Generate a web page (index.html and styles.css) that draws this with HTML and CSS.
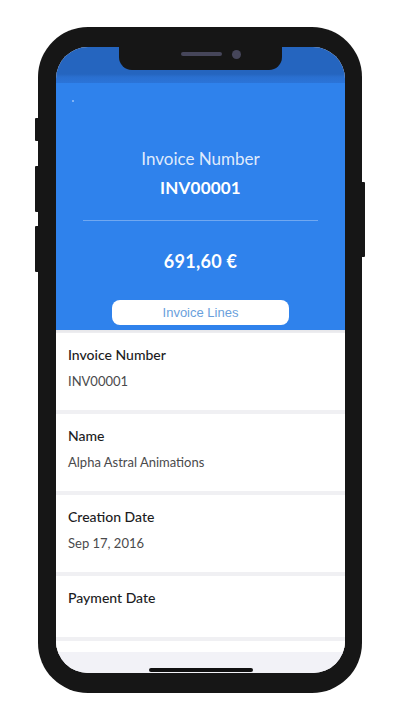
FILE: index.html
```html
<!DOCTYPE html>
<html lang="en">
<head>
<meta charset="utf-8">
<title>Invoice</title>
<link rel="stylesheet" href="styles.css">
</head>
<body>
<div class="stage">
  <div class="phone">
    <span class="side-btn side-btn--l1"></span>
    <span class="side-btn side-btn--l2"></span>
    <span class="side-btn side-btn--l3"></span>
    <span class="side-btn side-btn--r"></span>
    <div class="screen">
      <div class="notch"><span class="speaker"></span><span class="camera"></span></div>
      <div class="statusbar"></div>
      <header class="hero">
        <span class="back-dot"></span>
        <div class="hero-label">Invoice Number</div>
        <div class="hero-number">INV00001</div>
        <div class="hero-divider"></div>
        <div class="hero-amount">691,60 €</div>
        <button class="lines-btn" type="button">Invoice Lines</button>
      </header>
      <ul class="fields">
        <li class="field">
          <div class="field-label">Invoice Number</div>
          <div class="field-value">INV00001</div>
        </li>
        <li class="field">
          <div class="field-label">Name</div>
          <div class="field-value">Alpha Astral Animations</div>
        </li>
        <li class="field">
          <div class="field-label">Creation Date</div>
          <div class="field-value">Sep 17, 2016</div>
        </li>
        <li class="field">
          <div class="field-label">Payment Date</div>
          <div class="field-value field-value--empty"></div>
        </li>
        <li class="field field--blank"></li>
      </ul>
      <div class="bottom-bar"><span class="home-indicator"></span></div>
    </div>
  </div>
</div>
</body>
</html>
```

FILE: styles.css
```css
* { box-sizing: border-box; }

html, body {
  margin: 0;
  padding: 0;
  background: #ffffff;
}

body {
  font-family: Lato, "Noto Sans", sans-serif;
  width: 400px;
  height: 720px;
  overflow: hidden;
}

.stage {
  width: 400px;
  height: 720px;
  display: flex;
  align-items: center;
  justify-content: center;
}

.phone {
  position: relative;
  width: 324px;
  height: 666px;
  background: #161616;
  border-radius: 50px;
  padding: 20px 17px 20px 18px;
  display: flex;
}

.side-btn {
  position: absolute;
  width: 4px;
  background: #161616;
  border-radius: 1px;
}
.side-btn--l1 { left: -3px; top: 91px; height: 23px; }
.side-btn--l2 { left: -3px; top: 139px; height: 46px; }
.side-btn--l3 { left: -3px; top: 199px; height: 46px; }
.side-btn--r  { right: -3px; top: 155px; height: 75px; }

.screen {
  position: relative;
  flex: 1;
  border-radius: 32px;
  overflow: hidden;
  background: #f2f2f6;
  display: flex;
  flex-direction: column;
}

.notch {
  position: absolute;
  top: 0;
  left: 63px;
  width: 163px;
  height: 23px;
  background: #161616;
  border-radius: 0 0 13px 13px;
  display: flex;
  align-items: center;
  justify-content: center;
  gap: 10px;
  padding: 0 0 9px 20px;
  z-index: 2;
}

.speaker {
  width: 41px;
  height: 4px;
  border-radius: 2px;
  background: #46465a;
}

.camera {
  width: 9px;
  height: 9px;
  border-radius: 50%;
  background: #46465a;
}

.statusbar {
  flex: none;
  height: 36px;
  background: linear-gradient(to bottom, #2565bf 0, #2565bf 27px, #2a6fcf 30px, #2b74d8 36px);
}

.hero {
  position: relative;
  flex: none;
  height: 247px;
  background: #2f82ec;
  display: flex;
  flex-direction: column;
  align-items: center;
  padding-top: 65px;
  color: #ffffff;
}

.back-dot {
  position: absolute;
  left: 16px;
  top: 17px;
  width: 2px;
  height: 2px;
  background: #7fb2f5;
}

.hero-label {
  font-size: 17px;
  line-height: 22px;
  font-weight: 400;
  color: rgba(255, 255, 255, 0.86);
}

.hero-number {
  margin-top: 7px;
  font-size: 17px;
  line-height: 22px;
  font-weight: 700;
  letter-spacing: 0.2px;
}

.hero-divider {
  margin-top: 21px;
  width: 235px;
  height: 1px;
  background: #70a8f1;
}

.hero-amount {
  margin-top: 28px;
  font-size: 18px;
  line-height: 24px;
  font-weight: 700;
  letter-spacing: 0.3px;
}

.lines-btn {
  margin-top: 27px;
  width: 177px;
  height: 25px;
  border: none;
  border-radius: 8px;
  background: #ffffff;
  color: #6a9fdc;
  font-family: "Liberation Sans", Arial, sans-serif;
  font-size: 13px;
  padding: 0;
}

.fields {
  flex: 1;
  min-height: 0;
  overflow: hidden;
  list-style: none;
  margin: 0;
  padding: 3px 0 0;
  background: #f0f0f3;
  display: flex;
  flex-direction: column;
  gap: 4px;
  box-shadow: inset 0 3px 4px -2px rgba(0, 0, 0, 0.06);
}

.field {
  flex: none;
  background: #ffffff;
  padding: 13px 12px 20px;
}

.field--blank {
  height: 40px;
}

.field-label {
  font-size: 14px;
  line-height: 18px;
  font-weight: 500;
  color: #1c1c1e;
}

.field-value {
  margin-top: 9px;
  font-size: 13px;
  line-height: 17px;
  color: #4a4a4c;
  min-height: 17px;
}

.field-value--empty {
  margin-top: 0;
  min-height: 10px;
}

.bottom-bar {
  flex: none;
  height: 21px;
  background: #f2f2f7;
  display: flex;
  justify-content: center;
  align-items: flex-end;
  padding-bottom: 1px;
}

.home-indicator {
  width: 104px;
  height: 4px;
  border-radius: 2px;
  background: #111111;
}
```
